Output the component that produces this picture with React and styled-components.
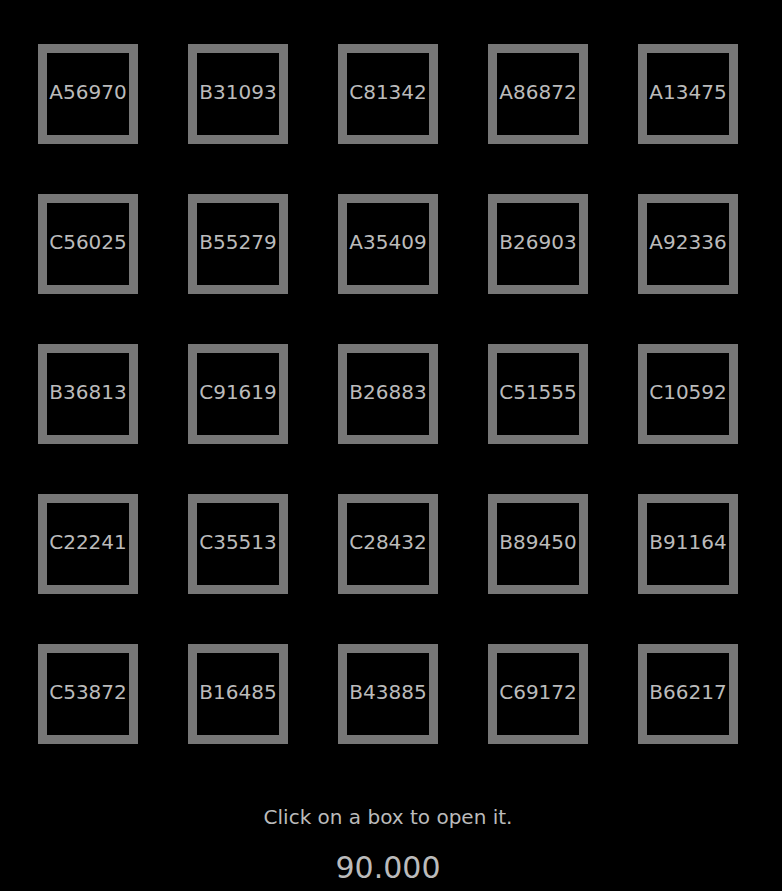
import styled, { createGlobalStyle } from 'styled-components';

const codes = [
  'A56970', 'B31093', 'C81342', 'A86872', 'A13475',
  'C56025', 'B55279', 'A35409', 'B26903', 'A92336',
  'B36813', 'C91619', 'B26883', 'C51555', 'C10592',
  'C22241', 'C35513', 'C28432', 'B89450', 'B91164',
  'C53872', 'B16485', 'B43885', 'C69172', 'B66217',
];

const GlobalStyle = createGlobalStyle`
  html, body {
    margin: 0;
    background: #000;
    color: #bbb;
    font-family: "DejaVu Sans", sans-serif;
  }
`;

const Page = styled.div`
  width: 750px;
  padding: 19px 0 0 13px;
`;

const Grid = styled.div`
  display: grid;
  grid-template-columns: repeat(5, 150px);
  grid-auto-rows: 150px;
`;

const Cell = styled.div`
  display: flex;
  justify-content: center;
  align-items: flex-start;
  padding-top: 25px;
`;

const Box = styled.button`
  box-sizing: border-box;
  width: 100px;
  height: 100px;
  border: 9px solid #777;
  background: #000;
  color: #bbb;
  font-family: "DejaVu Sans", sans-serif;
  font-size: 20px;
  line-height: 24px;
  padding: 0 0 4px;
  display: flex;
  align-items: center;
  justify-content: center;
  cursor: pointer;
`;

const Hint = styled.p`
  margin: 37px 0 0;
  text-align: center;
  font-size: 20px;
  line-height: 23px;
`;

const Score = styled.div`
  margin-top: 21px;
  text-align: center;
  font-size: 30px;
  line-height: 35px;
`;

export default function App() {
  return (
    <>
      <GlobalStyle />
      <Page>
        <Grid>
          {codes.map((c) => (
            <Cell key={c}>
              <Box>{c}</Box>
            </Cell>
          ))}
        </Grid>
        <Hint>Click on a box to open it.</Hint>
        <Score>90.000</Score>
      </Page>
    </>
  );
}
